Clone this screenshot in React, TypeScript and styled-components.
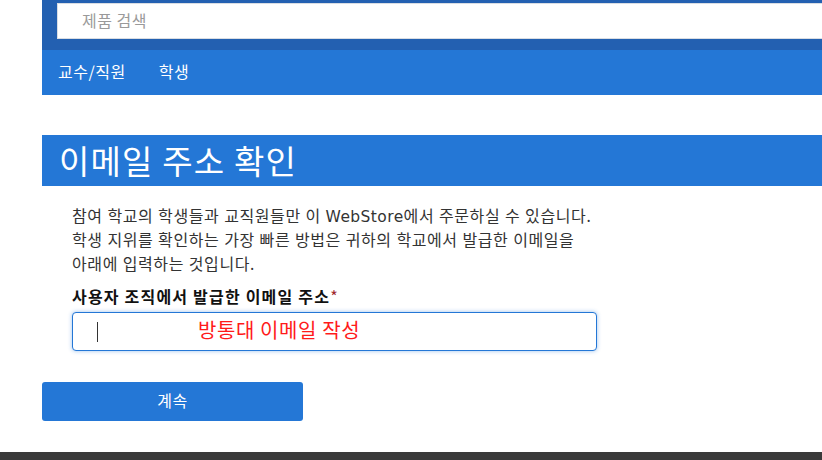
import React from "react";
import styled, { createGlobalStyle } from "styled-components";

const Global = createGlobalStyle`
  html, body { margin: 0; padding: 0; background: #ffffff; overflow: hidden; }
  body { font-family: "Noto Sans", "Noto Sans CJK KR", sans-serif; }
  * { box-sizing: border-box; }
`;

const Page = styled.div`
  width: 822px;
  height: 460px;
  display: flex;
  flex-direction: column;
  position: relative;
`;

const Main = styled.div`
  margin-left: 42px;
  flex: 1;
  display: flex;
  flex-direction: column;
`;

const SearchBar = styled.div`
  background: #2360b1;
  height: 50px;
  padding: 3px 0 11px 15px;
  display: flex;
`;

const SearchInput = styled.div`
  flex: 1;
  background: #ffffff;
  border: 1px solid #d9dde3;
  border-right: none;
  display: flex;
  align-items: center;
  padding: 0 0 3px 24px;
  font-family: "Noto Sans CJK KR", sans-serif;
  font-size: 16px;
  letter-spacing: 0.5px;
  color: #9a9a9a;
`;

const Nav = styled.nav`
  background: #2477d6;
  height: 45px;
  display: flex;
  align-items: center;
  gap: 33px;
  padding: 0 0 3px 16px;
`;

const NavItem = styled.span`
  font-family: "Noto Sans CJK KR", sans-serif;
  font-size: 16px;
  letter-spacing: 0.5px;
  color: #ffffff;
`;

const TitleBar = styled.h1`
  margin: 40px 0 0 0;
  height: 51px;
  background: #2477d6;
  color: #ffffff;
  font-family: "Noto Sans CJK KR", sans-serif;
  font-weight: 400;
  font-size: 33px;
  letter-spacing: 1.2px;
  line-height: 50px;
  padding-left: 17px;
`;

const Body = styled.div`
  padding: 18px 0 0 30px;
`;

const Paragraph = styled.p`
  margin: 0;
  font-family: "Noto Sans", "Noto Sans CJK KR", sans-serif;
  font-size: 16px;
  letter-spacing: 0.6px;
  line-height: 24px;
  height: 72px;
  color: #333333;
`;

const Brand = styled.span`
  font-family: "DejaVu Sans", "Noto Sans CJK KR", sans-serif;
  font-size: 15.5px;
  letter-spacing: 0.4px;
  line-height: 1;
`;

const Label = styled.div`
  margin-top: 10px;
  font-family: "Noto Sans CJK KR", sans-serif;
  font-weight: 700;
  font-size: 16px;
  letter-spacing: 1.2px;
  line-height: 20px;
  color: #111111;
`;

const Required = styled.span`
  color: #a0282d;
  font-weight: 400;
`;

const InputBox = styled.div`
  position: relative;
  margin-top: 6px;
  width: 525px;
  height: 39px;
  border: 1px solid #2477d6;
  border-radius: 4px;
  box-shadow: 0 0 4px rgba(36, 119, 214, 0.45);
  background: #ffffff;
`;

const Caret = styled.span`
  position: absolute;
  left: 24px;
  top: 9px;
  width: 1px;
  height: 20px;
  background: #333333;
`;

const Annotation = styled.span`
  position: absolute;
  left: 125px;
  top: 4px;
  font-family: "Noto Sans CJK KR", sans-serif;
  font-size: 20px;
  letter-spacing: 0.6px;
  line-height: 26px;
  color: #ff1a1a;
`;

const Button = styled.button`
  margin-top: 31px;
  width: 261px;
  height: 39px;
  border: none;
  border-radius: 3px;
  background: #2477d6;
  color: #ffffff;
  font-family: "Noto Sans CJK KR", sans-serif;
  font-size: 16px;
  letter-spacing: 0.5px;
  padding: 0 0 4px 0;
  cursor: pointer;
`;

const Footer = styled.footer`
  position: absolute;
  left: 0;
  right: 0;
  bottom: 0;
  height: 8px;
  background: #3a3a3a;
`;

export default function App() {
  return (
    <Page>
      <Global />
      <Main>
        <SearchBar>
          <SearchInput>제품 검색</SearchInput>
        </SearchBar>
        <Nav>
          <NavItem>교수/직원</NavItem>
          <NavItem>학생</NavItem>
        </Nav>
        <TitleBar>이메일 주소 확인</TitleBar>
        <Body>
          <Paragraph>
            참여 학교의 학생들과 교직원들만 이 <Brand>WebStore</Brand>에서 주문하실 수 있습니다.
            <br />
            학생 지위를 확인하는 가장 빠른 방법은 귀하의 학교에서 발급한 이메일을
            <br />
            아래에 입력하는 것입니다.
          </Paragraph>
          <Label>
            사용자 조직에서 발급한 이메일 주소<Required>*</Required>
          </Label>
          <InputBox>
            <Caret />
            <Annotation>방통대 이메일 작성</Annotation>
          </InputBox>
        </Body>
        <Button>계속</Button>
      </Main>
      <Footer />
    </Page>
  );
}
